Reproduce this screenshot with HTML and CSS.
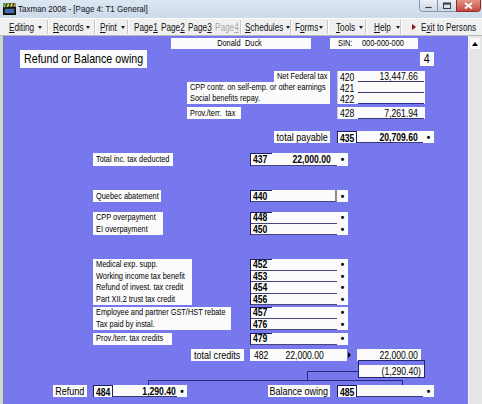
FILE: index.html
```html
<!DOCTYPE html>
<html>
<head>
<meta charset="utf-8">
<title>Taxman 2008</title>
<link rel="stylesheet" href="styles.css">
</head>
<body>
<div class="win">
  <div class="titlebar">
    <svg class="appicon" width="13" height="12" viewBox="0 0 13 12">
      <rect x="0.5" y="4.5" width="12" height="7" fill="#1d2a1d" stroke="#0a0a0a"/>
      <rect x="2" y="6" width="9" height="4" fill="#3b6db0"/>
      <polygon points="0,1 12,0 12.5,3.5 0.5,4.5" fill="#e8e04a" stroke="#222" stroke-width="0.6"/>
      <line x1="2.5" y1="4.3" x2="4" y2="0.8" stroke="#222" stroke-width="1.2"/>
      <line x1="6" y1="4" x2="7.5" y2="0.5" stroke="#222" stroke-width="1.2"/>
      <line x1="9.5" y1="3.7" x2="11" y2="0.2" stroke="#222" stroke-width="1.2"/>
      <rect x="0" y="0" width="3" height="3" fill="#4caa3a"/>
    </svg>
    <span class="title"><span class="n">Taxman 2008 - [Page 4: T1 General]</span></span>
    <svg class="wbtns" width="62" height="12" viewBox="0 0 62 12">
      <defs>
        <linearGradient id="gb" x1="0" y1="0" x2="0" y2="1">
          <stop offset="0" stop-color="#eef3f9"/>
          <stop offset="1" stop-color="#c9d6e6"/>
        </linearGradient>
        <linearGradient id="gr" x1="0" y1="0" x2="0" y2="1">
          <stop offset="0" stop-color="#e59a8e"/>
          <stop offset="1" stop-color="#c2463a"/>
        </linearGradient>
      </defs>
      <path d="M0.5 -1 V8.5 Q0.5 11.5 3.5 11.5 H18.5 V-1" fill="url(#gb)" stroke="#8595ab"/>
      <rect x="6" y="6.5" width="7" height="2" fill="#3a3a3a" stroke="#fff" stroke-width="0.6"/>
      <path d="M18.5 -1 V11.5 H37.5 V-1" fill="url(#gb)" stroke="#8595ab"/>
      <rect x="24.5" y="3" width="7" height="5.5" fill="none" stroke="#3a3a3a" stroke-width="1"/>
      <rect x="24.5" y="3" width="7" height="1.6" fill="#3a3a3a"/>
      <path d="M37.5 -1 V11.5 H58.5 Q61.5 11.5 61.5 8.5 V-1" fill="url(#gr)" stroke="#8c3027"/>
      <path d="M46 3 L53 8.5 M53 3 L46 8.5" stroke="#fff" stroke-width="1.8"/>
    </svg>
  </div>

  <div class="toolbar">
    <span class="tb t-edit"><span class="tx w25"><span class="n"><u>E</u>diting</span></span><i class="dd"></i></span>
    <span class="sep"></span>
    <span class="tb t-rec"><span class="tx w29"><span class="n"><u>R</u>ecords</span></span><i class="dd"></i></span>
    <span class="sep"></span>
    <span class="tb t-print"><span class="tx w17"><span class="n"><u>P</u>rint</span></span><i class="dd"></i></span>
    <span class="sep"></span>
    <span class="tb t-pages">
      <span class="pg"><span class="n">Page<u>1</u></span></span>
      <span class="pg"><span class="n">Page<u>2</u></span></span>
      <span class="pg"><span class="n">Page<u>3</u></span></span>
      <span class="pg off"><span class="n">Page<u>4</u></span></span>
    </span>
    <span class="sep"></span>
    <span class="tb t-sched"><span class="tx w37"><span class="n"><u>S</u>chedules</span></span><i class="dd"></i></span>
    <span class="sep"></span>
    <span class="tb t-forms"><span class="tx w20"><span class="n">F<u>o</u>rms</span></span><i class="dd"></i></span>
    <span class="sep"></span>
    <span class="tb t-tools"><span class="tx w19"><span class="n"><u>T</u>ools</span></span><i class="dd"></i></span>
    <span class="sep"></span>
    <span class="tb t-help"><span class="tx w18"><span class="n"><u>H</u>elp</span></span><i class="dd"></i></span>
    <span class="sep"></span>
    <span class="tb t-exit"><i class="exitarrow"></i><span class="tx w53"><span class="n">E<u>x</u>it to Persons</span></span></span>
  </div>

  <div class="work">
    <div class="edge"></div>
    <div class="canvas">
      <div class="hdr">
        <div class="namebox"><span class="fn"><span class="n r">Donald</span></span><span class="ln"><span class="n">Duck</span></span></div>
        <div class="sinbox"><span class="sinlab"><span class="n">SIN:</span></span><span><span class="n">000-000-000</span></span></div>
      </div>

      <div class="ttlrow">
        <div class="ttl"><span class="n">Refund or Balance owing</span></div>
        <div class="pgno"><span class="n c">4</span></div>
      </div>

      <div class="topsec">
        <div class="lcol">
          <div class="lbl nf"><span class="n">Net Federal tax</span></div>
          <div class="lbl lgrp"><div><span class="n">CPP contr. on self-emp. or other earnings</span></div><div><span class="n">Social benefits repay.</span></div></div>
          <div class="lbl pt"><span class="n">Prov./terr.&nbsp; tax</span></div>
        </div>
        <div class="vcol">
          <div class="tbox">
            <div class="frow"><span class="code"><span class="n">420</span></span><span class="val"><span class="n r">13,447.66</span></span></div>
            <div class="frow"><span class="code"><span class="n">421</span></span><span class="val"></span></div>
            <div class="frow"><span class="code"><span class="n">422</span></span><span class="val blue"></span></div>
          </div>
          <div class="tbox t428">
            <div class="frow"><span class="code"><span class="n">428</span></span><span class="val"><span class="n r">7,261.94</span></span></div>
          </div>
        </div>
      </div>

      <div class="tprow">
        <div class="biglab tplab"><span class="n c">total payable</span></div>
        <div class="hbox">
          <span class="hcode"><span class="n">435</span></span><span class="val bold"><span class="n r">20,709.60</span></span><span class="dot">•</span>
        </div>
      </div>

      <div class="lrow r437">
        <div class="lcell"><div class="lbox w80"><div><span class="n">Total inc. tax deducted</span></div></div></div>
        <div class="fbox">
          <div class="frow"><span class="cv"><span class="code"><span class="n">437</span></span><span class="val bold"><span class="n r">22,000.00</span></span></span><span class="dot">•</span></div>
        </div>
      </div>

      <div class="lrow r440">
        <div class="lcell"><div class="lbox w68"><div><span class="n">Quebec abatement</span></div></div></div>
        <div class="fbox">
          <div class="frow"><span class="cv caret"><span class="code"><span class="n">440</span></span><span class="val"></span></span><span class="dot">•</span></div>
        </div>
      </div>

      <div class="lrow r448">
        <div class="lcell"><div class="lbox w70"><div><span class="n">CPP overpayment</span></div><div><span class="n">EI overpayment</span></div></div></div>
        <div class="fbox">
          <div class="frow"><span class="cv"><span class="code"><span class="n">448</span></span><span class="val"></span></span><span class="dot">•</span></div>
          <div class="frow"><span class="cv"><span class="code"><span class="n">450</span></span><span class="val"></span></span><span class="dot">•</span></div>
        </div>
      </div>

      <div class="lrow r452">
        <div class="lcell"><div class="lbox w99"><div><span class="n">Medical exp. supp.</span></div><div><span class="n">Working income tax benefit</span></div><div><span class="n">Refund of invest. tax credit</span></div><div><span class="n">Part XII.2 trust tax credit</span></div></div></div>
        <div class="fbox">
          <div class="frow"><span class="cv"><span class="code"><span class="n">452</span></span><span class="val"></span></span><span class="dot">•</span></div>
          <div class="frow"><span class="cv"><span class="code"><span class="n">453</span></span><span class="val"></span></span><span class="dot">•</span></div>
          <div class="frow"><span class="cv"><span class="code"><span class="n">454</span></span><span class="val"></span></span><span class="dot">•</span></div>
          <div class="frow"><span class="cv"><span class="code"><span class="n">456</span></span><span class="val"></span></span><span class="dot">•</span></div>
        </div>
      </div>

      <div class="lrow r457">
        <div class="lcell"><div class="lbox w138"><div><span class="n">Employee and partner GST/HST rebate</span></div><div class="short"><span class="n">Tax paid by instal.</span></div></div></div>
        <div class="fbox">
          <div class="frow"><span class="cv"><span class="code"><span class="n">457</span></span><span class="val"></span></span><span class="dot">•</span></div>
          <div class="frow"><span class="cv"><span class="code"><span class="n">476</span></span><span class="val"></span></span><span class="dot">•</span></div>
        </div>
      </div>

      <div class="lrow r479">
        <div class="lcell"><div class="lbox w79"><div><span class="n">Prov./terr. tax credits</span></div></div></div>
        <div class="fbox">
          <div class="frow"><span class="cv"><span class="code"><span class="n">479</span></span><span class="val"></span></span><span class="dot">•</span></div>
        </div>
      </div>

      <div class="tcrow">
        <div class="biglab tclab"><span class="n c">total credits</span></div>
        <div class="flat">
          <span class="fcode"><span class="n">482</span></span><span class="fval"><span class="n r">22,000.00</span></span>
        </div>
        <div class="arr"><i></i></div>
        <div class="flat2"><span class="n r">22,000.00</span></div>
      </div>

      <div class="diffrow">
        <div class="diffval"><span class="n r">(1,290.40)</span></div>
      </div>

      <div class="brow">
        <div class="biglab rlab"><span class="n c">Refund</span></div>
        <div class="hbox rbox">
          <span class="hcode"><span class="n">484</span></span><span class="val bold"><span class="n r">1,290.40</span></span><span class="dot">•</span>
        </div>
        <div class="biglab blab"><span class="n c">Balance owing</span></div>
        <div class="hbox">
          <span class="hcode"><span class="n">485</span></span><span class="val"></span><span class="dot">•</span>
        </div>
      </div>

      <svg class="links" width="464" height="368" viewBox="0 0 464 368">
        <path d="M303.5 335.5 H354 M303.5 335.5 V344.5 M144.5 344.5 H398.5 M144.5 344.5 V349 M398.5 344.5 V349" fill="none" stroke="#26267a" stroke-width="1"/>
      </svg>
    </div>
    <div class="scroll"><span class="sup"><i></i></span></div>
  </div>
</div>
</body>
</html>
```

FILE: styles.css
```css
* { box-sizing: border-box; margin: 0; padding: 0; }
html, body { width: 482px; height: 404px; overflow: hidden; }
body {
  margin: 0;
  font-family: "Liberation Sans", Arial, sans-serif;
  color: #000;
  background: #fff;
}
/* narrow rendering of the small UI font */
.n { display: inline-block; white-space: nowrap; transform: scaleX(0.82); transform-origin: 0 50%; }
.n.r { transform-origin: 100% 50%; }
.n.c { transform-origin: 50% 50%; }

.win { width: 482px; height: 404px; display: flex; flex-direction: column; background: #cfdbea; }

/* title bar */
.titlebar {
  height: 18px; flex: none; display: flex; align-items: flex-start;
  background: linear-gradient(#dde7f3, #cddaeb);
}
.appicon { margin: 3px 0 0 3px; flex: none; }
.title { width: 300px; font-size: 9.8px; line-height: 18px; margin-left: 2px; color: #111; white-space: nowrap; }
.wbtns { margin-left: auto; margin-right: 1px; flex: none; }

/* toolbar */
.toolbar {
  height: 18px; flex: none; display: flex; align-items: stretch;
  background: #f0f0f0; font-size: 10px; padding-left: 4px;
  border-top: 1px solid #fbfbfb; border-bottom: 1px solid #b9b9b9;
}
.tb { display: flex; align-items: center; white-space: nowrap; flex: none; color: #111; }
.tx { display: flex; flex: none; }
.w17 { width: 17px; } .w18 { width: 18px; } .w19 { width: 19px; } .w20 { width: 20px; }
.w25 { width: 25px; } .w29 { width: 29px; } .w37 { width: 37px; } .w53 { width: 53px; }
.tb u, .pg u { text-decoration: underline; text-underline-offset: 1px; }
.sep { width: 2px; flex: none; border-left: 1px solid #c6c6c6; border-right: 1px solid #fff; margin: 1px 0; }
.dd {
  display: inline-block; flex: none; width: 0; height: 0; margin-left: 4px; margin-top: 1px;
  border-left: 2.5px solid transparent; border-right: 2.5px solid transparent; border-top: 3px solid #222;
}
.t-edit { width: 43px; padding-left: 5px; }
.t-rec { width: 45px; padding-left: 4px; }
.t-print { width: 31px; padding-left: 4px; }
.t-pages { width: 111px; padding-left: 5px; }
.pg { width: 27px; flex: none; display: flex; }
.pg.off { color: #a7a7a7; }
.t-sched { width: 48px; padding-left: 3px; }
.t-forms { width: 35px; padding-left: 3px; }
.t-tools { width: 36px; padding-left: 7px; }
.t-help { width: 33px; padding-left: 7px; }
.t-exit { width: 76px; padding-left: 10px; }
.exitarrow {
  display: inline-block; flex: none; width: 0; height: 0; margin-right: 5px;
  border-top: 3.5px solid transparent; border-bottom: 3.5px solid transparent; border-left: 4px solid #8e1414;
}

/* workspace */
.work { flex: 1; display: flex; min-height: 0; }
.edge { width: 4px; flex: none; background: #cdd6e1; border-right: 1px solid #7d7d85; }
.canvas {
  width: 464px; flex: none; position: relative; overflow: hidden;
  background-color: #7878ee;
  display: flex; flex-direction: column; align-items: flex-start;
}
.scroll { width: 14px; flex: none; background: #e5e5e5; border-left: 1px solid #f6f6f6; padding: 2px 2px 0 1px; }
.sup { display: flex; height: 11px; background: #fafafa; align-items: center; justify-content: center; }
.sup i { width: 0; height: 0; border-left: 3px solid transparent; border-right: 3px solid transparent; border-bottom: 4px solid #000; }

/* header */
.hdr { display: flex; height: 11px; margin-top: 2px; font-size: 9px; line-height: 11px; flex: none; }
.namebox { margin-left: 167px; width: 140px; background: #fbfbfb; display: flex; }
.fn { width: 70px; display: flex; justify-content: flex-end; }
.ln { padding-left: 4px; display: flex; }
.sinbox { margin-left: 19px; width: 88px; background: #fbfbfb; display: flex; padding-left: 8px; }
.sinlab { width: 24px; display: flex; }

/* title */
.ttlrow { display: flex; align-items: center; width: 464px; margin-top: 1px; height: 18px; flex: none; }
.ttl { margin-left: 16px; width: 127px; height: 18px; line-height: 18px; padding: 0 4px; font-size: 13px; background: #fbfbfb; white-space: nowrap; display: flex; }
.pgno { margin-left: auto; margin-right: 34px; width: 14px; height: 14px; line-height: 14px; font-size: 13px; background: #fbfbfb; display: flex; justify-content: center; }

/* top section */
.topsec { display: flex; margin-top: 3px; font-size: 9px; flex: none; }
.lcol { margin-left: 183px; width: 143px; display: flex; flex-direction: column; align-items: flex-start; }
.lbl { background: #fbfbfb; padding: 0 3px; line-height: 11px; white-space: nowrap; }
.nf { align-self: flex-end; width: 56px; height: 11px; }
.lgrp { align-self: stretch; height: 22px; }
.pt { margin-top: 3px; width: 54px; height: 12px; line-height: 12px; }
.vcol { margin-left: 7px; width: 88px; display: flex; flex-direction: column; }
.tbox { background: #fbfbfb; border-left: 1px solid #c9c9d8; }
.t428 { margin-top: 3px; }

.frow { display: flex; height: 11px; font-size: 10.5px; }
.frow > span, .cv > span, .hbox > span, .flat > span { display: flex; align-items: center; white-space: nowrap; }
.t428 .frow { height: 12px; }
.tbox .code { width: 20px; padding-left: 2px; }
.tbox .val { flex: 1; justify-content: flex-end; padding-right: 6px; margin-right: 1px; border-bottom: 1px solid #3a3a6e; }
.tbox .val.blue { border-bottom-color: #2a2a9a; }

/* big labels */
.biglab { background: #fbfbfb; font-size: 11px; display: flex; align-items: center; justify-content: center; white-space: nowrap; height: 12px; }

.tprow { display: flex; margin-top: 12px; height: 12px; flex: none; }
.tplab { margin-left: 270px; width: 56px; }
.hbox { margin-left: 7px; width: 97px; height: 12px; background: #fbfbfb; display: flex; font-size: 10.5px; }
.hcode { width: 20px; padding-left: 2px; font-weight: bold; border: 1px solid #1e1e5e; border-bottom: none; }
.hbox .val { flex: 1; justify-content: flex-end; padding-right: 5px; border-bottom: 1px solid #3a3a6e; }
.hbox .dot { width: 11px; justify-content: center; }

/* lower fields */
.lrow { display: flex; margin-left: 89px; flex: none; }
.lcell { width: 157px; display: flex; align-items: flex-start; }
.lbox { background: #fbfbfb; padding: 0 3px; font-size: 9px; white-space: nowrap; }
.lbox div { height: 11.5px; line-height: 11.5px; }
.w68 { width: 68px; } .w70 { width: 70px; } .w79 { width: 79px; } .w80 { width: 80px; }
.w99 { width: 99px; } .w138 { width: 138px; }
.fbox {
  width: 98px; background-color: #fbfbfb;
  border-left: 1px solid #1e1e5e;
  background-image: linear-gradient(#1e1e5e, #1e1e5e);
  background-repeat: no-repeat; background-size: 21px 1px;
}
.fbox .frow { height: 11.5px; }
.cv { width: 86px; display: flex; border-bottom: 1px solid #46467c; }
.cv.caret { border-right: 2px solid #8d8d8d; }
.fbox .code { width: 20px; padding-left: 2px; font-weight: bold; }
.fbox .val { flex: 1; justify-content: flex-end; padding-right: 6px; }
.bold { font-weight: bold; }
.fbox .dot { flex: 1; justify-content: center; }
.dot { font-size: 10px; font-weight: bold; }

.r437 { margin-top: 10px; }
.r437 .lbox div { height: 13px; line-height: 13px; }
.r437 .frow { height: 13px; }
.r440 { margin-top: 24px; }
.r440 .lbox div { height: 12px; line-height: 12px; }
.r440 .frow { height: 12px; }
.r448 { margin-top: 10px; }
.r452 { margin-top: 24px; }
.r457 { margin-top: 2px; }
.r479 { margin-top: 3px; }

/* total credits */
.tcrow { display: flex; margin-top: 4.5px; height: 12px; flex: none; }
.tclab { margin-left: 187px; width: 53px; }
.flat { margin-left: 6px; width: 97px; background: #fbfbfb; display: flex; font-size: 10.5px; }
.fcode { width: 24px; padding-left: 4px; }
.fval { flex: 1; justify-content: flex-end; padding-right: 23px; }
.arr { width: 10px; display: flex; align-items: center; padding-left: 1px; }
.arr i { width: 0; height: 0; border-top: 3px solid transparent; border-bottom: 3px solid transparent; border-left: 3px solid #000; }
.flat2 { width: 64px; background: #fbfbfb; font-size: 10.5px; padding-right: 3px; line-height: 12px; display: flex; justify-content: flex-end; }

.diffrow {
  margin-top: -1px; margin-left: 354px; width: 67px; height: 18px; flex: none;
  border: 1px solid #24246c; display: flex; flex-direction: column; justify-content: flex-end;
}
.diffval { background: #fbfbfb; height: 12px; line-height: 12px; padding-right: 3px; font-size: 10.5px; display: flex; justify-content: flex-end; }

/* bottom */
.brow { display: flex; margin-top: 7px; height: 12px; flex: none; }
.rlab { margin-left: 49px; width: 34px; }
.rbox { margin-left: 6px; width: 94px; }
.rbox .val { padding-right: 1px; }
.rbox .dot { width: 10px; }
.blab { margin-left: 81px; width: 62px; }

.links { position: absolute; left: 0; top: 0; pointer-events: none; }
```
